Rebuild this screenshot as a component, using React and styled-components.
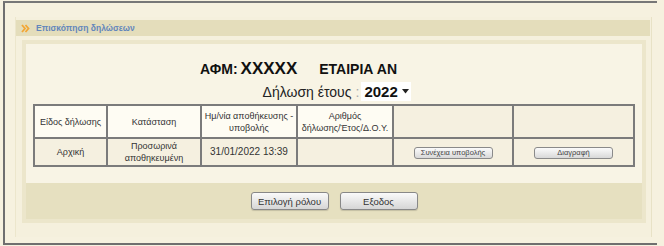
import React from 'react';
import styled, { createGlobalStyle } from 'styled-components';

const GlobalStyle = createGlobalStyle`
  body {
    margin: 0;
    background: #f6f1df;
    font-family: "Liberation Sans", Arial, sans-serif;
  }
`;

const Frame = styled.div`
  box-sizing: border-box;
  margin: 1px 0 0 3px;
  width: 654px;
  height: 244px;
  border-top: 2px solid #777;
  border-left: 2px solid #6f6f6f;
  border-bottom: 2px solid #6f6f6f;
  padding: 14px 0 0 10px;
`;

const Section = styled.div`
  box-sizing: border-box;
  width: 637px;
  height: 220px;
  border-left: 1px solid #ece6cc;
  border-right: 1px solid #e8e2c6;
  background: #f5f0dd;
  padding-top: 3px;
`;

const HeaderBar = styled.div`
  display: flex;
  align-items: center;
  gap: 6px;
  height: 16px;
  width: 634px;
  background: #e4ddbb;
  padding-left: 5px;
  box-sizing: border-box;
`;

const HeaderTitle = styled.span`
  font-size: 8.5px;
  font-weight: bold;
  color: #6386bb;
`;

const InnerPanel = styled.div`
  margin: 4px 0 0 6px;
  width: 624px;
  box-sizing: border-box;
  border: 4px solid #ece6cb;
`;

const LightArea = styled.div`
  background: #f8f4e5;
  height: 139px;
  box-sizing: border-box;
  padding-top: 15px;
  display: flex;
  flex-direction: column;
`;

const TitleRow = styled.div`
  display: flex;
  align-items: baseline;
  height: 20px;
  padding-left: 174px;
  color: #111;
  font-weight: bold;
`;

const TitleLabel = styled.span`
  font-size: ${(p) => p.size}px;
  margin-left: ${(p) => p.gap || 0}px;
`;

const YearRow = styled.div`
  display: flex;
  justify-content: center;
  align-items: center;
  height: 19px;
  margin-top: 3px;
  padding-left: 6px;
  font-size: 14px;
  color: #222;
`;

const Colon = styled.span`
  color: #aaa;
  margin: 0 2px 0 4px;
`;

const YearSelect = styled.div`
  display: flex;
  align-items: center;
  justify-content: space-between;
  width: 50px;
  height: 19px;
  box-sizing: border-box;
  background: #fff;
  padding: 0 2px 0 3px;
  font-size: 15px;
  font-weight: bold;
  color: #111;
`;

const Table = styled.table`
  margin: 3px auto 0;
  width: 601px;
  border-collapse: separate;
  border-spacing: 0;
  border: 1px solid #7b7b7b;
  table-layout: fixed;
`;

const Cell = styled.td`
  border: 1px solid #7b7b7b;
  background: ${(p) => (p.light ? '#fefcf3' : '#f5f0e0')};
  text-align: center;
  vertical-align: middle;
  white-space: nowrap;
  font-size: ${(p) => p.size || 9}px;
  line-height: 12px;
  color: #333;
  padding: 0;
  height: ${(p) => p.h}px;
`;

const SmallButton = styled.button`
  width: 79px;
  height: 12px;
  padding: 0;
  border: 1px solid #8a8a8a;
  border-radius: 3px;
  background: linear-gradient(#fbfbfb, #d8d8d8);
  font-family: "Liberation Sans", Arial, sans-serif;
  font-size: 7.5px;
  line-height: 10px;
  color: #444;
`;

const Band = styled.div`
  height: 36px;
  background: #e6e0c0;
  display: flex;
  justify-content: center;
  align-items: center;
  gap: 11px;
`;

const Button = styled.button`
  width: 78px;
  height: 18px;
  padding: 0;
  border: 1px solid #888;
  border-radius: 3px;
  background: linear-gradient(#fafafa, #d6d6d6);
  box-shadow: 0 1px 1px rgba(0, 0, 0, 0.15);
  font-family: "Liberation Sans", Arial, sans-serif;
  font-size: 9.5px;
  color: #333;
`;

const Chevrons = () => (
  <svg width="9" height="9" viewBox="0 0 9 9">
    <path d="M1 1 L4 4.5 L1 8" fill="none" stroke="#f3a634" strokeWidth="1.8" />
    <path d="M4.5 1 L7.5 4.5 L4.5 8" fill="none" stroke="#f3a634" strokeWidth="1.8" />
  </svg>
);

const Caret = () => (
  <svg width="7" height="5" viewBox="0 0 7 5">
    <path d="M0 0 H7 L3.5 4.5 Z" fill="#222" />
  </svg>
);

const widths = [73, 94, 96, 96, 120, 121];

export default function App() {
  return (
    <>
      <GlobalStyle />
      <Frame>
        <Section>
          <HeaderBar>
            <Chevrons />
            <HeaderTitle>Επισκόπηση δηλώσεων</HeaderTitle>
          </HeaderBar>
          <InnerPanel>
            <LightArea>
              <TitleRow>
                <TitleLabel size={14}>ΑΦΜ:</TitleLabel>
                <TitleLabel size={17} gap={3}>XXXXX</TitleLabel>
                <TitleLabel size={14} gap={22}>ΕΤΑΙΡΙΑ ΑΝ</TitleLabel>
              </TitleRow>
              <YearRow>
                Δήλωση έτους<Colon>:</Colon>
                <YearSelect>
                  2022
                  <Caret />
                </YearSelect>
              </YearRow>
              <Table>
                <colgroup>
                  {widths.map((w, i) => (
                    <col key={i} style={{ width: w }} />
                  ))}
                </colgroup>
                <tbody>
                  <tr>
                    <Cell light h={31}>Είδος δήλωσης</Cell>
                    <Cell light h={31}>Κατάσταση</Cell>
                    <Cell light h={31}>Ημ/νία αποθήκευσης -<br />υποβολής</Cell>
                    <Cell light h={31}>Αριθμός<br />δήλωσης/Έτος/Δ.Ο.Υ.</Cell>
                    <Cell h={31} />
                    <Cell h={31} />
                  </tr>
                  <tr>
                    <Cell h={26}>Αρχική</Cell>
                    <Cell h={26}>Προσωρινά<br />αποθηκευμένη</Cell>
                    <Cell h={26} size={10}>31/01/2022 13:39</Cell>
                    <Cell h={26} />
                    <Cell h={26}>
                      <SmallButton>Συνέχεια υποβολής</SmallButton>
                    </Cell>
                    <Cell h={26}>
                      <SmallButton>Διαγραφή</SmallButton>
                    </Cell>
                  </tr>
                </tbody>
              </Table>
            </LightArea>
            <Band>
              <Button>Επιλογή ρόλου</Button>
              <Button>Εξοδος</Button>
            </Band>
          </InnerPanel>
        </Section>
      </Frame>
    </>
  );
}
